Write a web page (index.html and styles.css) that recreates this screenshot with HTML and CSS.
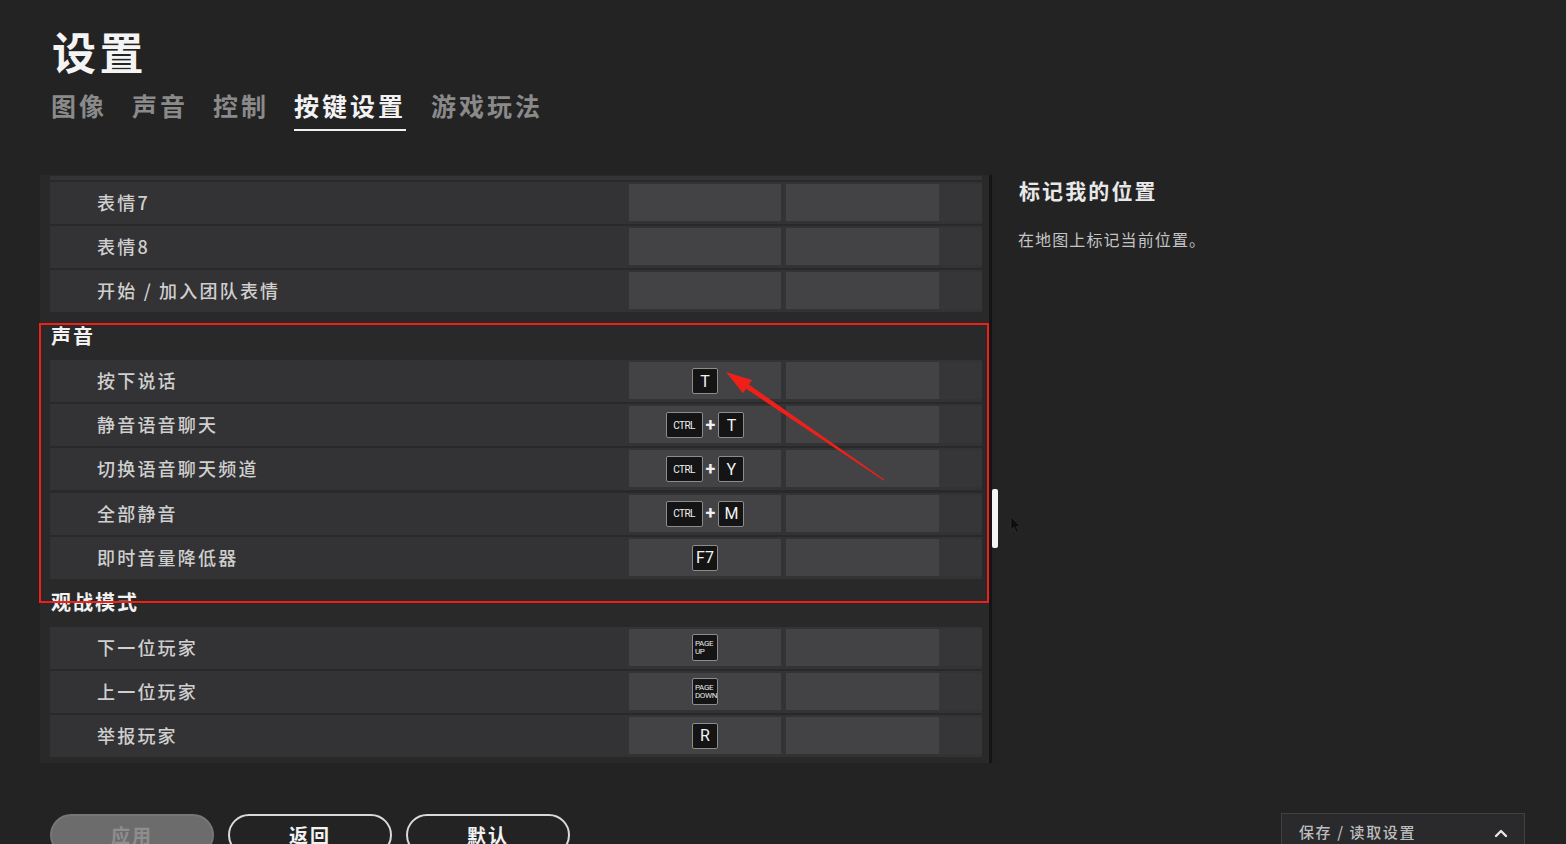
FILE: index.html
```html
<!DOCTYPE html>
<html lang="zh-CN">
<head>
<meta charset="utf-8">
<title>设置</title>
<link rel="stylesheet" href="styles.css">
</head>
<body>
<div class="page">
  <header class="head">
    <h1 class="title">设置</h1>
    <nav class="tabs">
      <span class="tab">图像</span>
      <span class="tab">声音</span>
      <span class="tab">控制</span>
      <span class="tab active">按键设置</span>
      <span class="tab">游戏玩法</span>
    </nav>
  </header>

  <main class="main">
    <section class="list-wrap">
      <div class="list">
        <div class="row partial"></div>
        <div class="row"><span class="label">表情7</span><span class="cell"></span><span class="cell"></span><span class="tail"></span></div>
        <div class="row"><span class="label">表情8</span><span class="cell"></span><span class="cell"></span><span class="tail"></span></div>
        <div class="row"><span class="label">开始 / 加入团队表情</span><span class="cell"></span><span class="cell"></span><span class="tail"></span></div>

        <div class="section-title">声音</div>
        <div class="row"><span class="label">按下说话</span><span class="cell"><span class="key">T</span></span><span class="cell"></span><span class="tail"></span></div>
        <div class="row"><span class="label">静音语音聊天</span><span class="cell"><span class="key wide small">CTRL</span><span class="plus">+</span><span class="key">T</span></span><span class="cell"></span><span class="tail"></span></div>
        <div class="row"><span class="label">切换语音聊天频道</span><span class="cell"><span class="key wide small">CTRL</span><span class="plus">+</span><span class="key">Y</span></span><span class="cell"></span><span class="tail"></span></div>
        <div class="row"><span class="label">全部静音</span><span class="cell"><span class="key wide small">CTRL</span><span class="plus">+</span><span class="key">M</span></span><span class="cell"></span><span class="tail"></span></div>
        <div class="row"><span class="label">即时音量降低器</span><span class="cell"><span class="key">F7</span></span><span class="cell"></span><span class="tail"></span></div>

        <div class="section-title">观战模式</div>
        <div class="row"><span class="label">下一位玩家</span><span class="cell"><span class="key tiny">PAGE<br>UP</span></span><span class="cell"></span><span class="tail"></span></div>
        <div class="row"><span class="label">上一位玩家</span><span class="cell"><span class="key tiny">PAGE<br>DOWN</span></span><span class="cell"></span><span class="tail"></span></div>
        <div class="row"><span class="label">举报玩家</span><span class="cell"><span class="key">R</span></span><span class="cell"></span><span class="tail"></span></div>
      </div>
      <div class="scroll"><div class="thumb"></div></div>
    </section>

    <aside class="info">
      <h2 class="info-title">标记我的位置</h2>
      <p class="info-desc">在地图上标记当前位置。</p>
    </aside>
  </main>

  <footer class="foot">
    <div class="buttons">
      <button class="btn disabled">应用</button>
      <button class="btn">返回</button>
      <button class="btn">默认</button>
    </div>
    <div class="save">
      <span>保存 / 读取设置</span>
      <svg class="chev" width="14" height="10" viewBox="0 0 14 10"><path d="M2 8 L7 3 L12 8" fill="none" stroke="#e6e6e6" stroke-width="2.4" stroke-linecap="round" stroke-linejoin="round"/></svg>
    </div>
  </footer>

  <div class="annot-box"></div>
  <svg class="annot-arrow" width="1566" height="844" viewBox="0 0 1566 844">
    <polygon points="726,372 752,380.1 748.9,384.6 884.3,479.6 883.7,480.4 746.1,388.8 743,393.3" fill="#ef1f1a"/>
  </svg>
  <svg class="cursor" width="12" height="18" viewBox="0 0 12 18"><path d="M1 1 L1 14 L4 11 L6.5 16.5 L8.5 15.5 L6 10.5 L10 10.5 Z" fill="#0d0d0d" stroke="#333" stroke-width="0.6"/></svg>
</div>
</body>
</html>
```

FILE: styles.css
```css
* { box-sizing: border-box; }

html, body {
  margin: 0;
  padding: 0;
  background: #232324;
  overflow: hidden;
}

body {
  font-family: "Noto Sans CJK SC", "Noto Sans", sans-serif;
  color: #e6e6e6;
}

.page {
  position: relative;
  width: 1566px;
  height: 844px;
  overflow: hidden;
  background: #232324;
}

/* header */
.head {
  padding: 24px 0 0 52px;
}

.title {
  margin: 0;
  font-size: 44px;
  line-height: 54px;
  font-weight: 700;
  letter-spacing: 3.5px;
  color: #f4f4f4;
}

.tabs {
  display: flex;
  gap: 25px;
  margin-top: 10px;
  margin-left: -1px;
}

.tab {
  font-size: 25px;
  line-height: 34px;
  font-weight: 700;
  letter-spacing: 3px;
  color: #8a8a8a;
  padding-bottom: 7px;
  border-bottom: 2px solid transparent;
}

.tab.active {
  color: #f2f2f2;
  border-bottom-color: #f0f0f0;
}

/* main */
.main {
  display: flex;
  margin-top: 44px;
}

.list-wrap {
  display: flex;
  margin-left: 40px;
  height: 588px;
}

.list {
  width: 949px;
  padding: 1px 7px 4px 10px;
  background: #29292a;
}

.row {
  display: flex;
  height: 42px;
  margin-bottom: 2.2px;
  background: #333335;
}

.row.partial {
  height: 4px;
  background: #343436;
  margin-bottom: 2px;
}

.label {
  width: 579px;
  padding-left: 47px;
  font-size: 18px;
  line-height: 40px;
  letter-spacing: 2.2px;
  color: #cfcfcf;
  font-weight: 500;
}

.cell {
  width: 152px;
  margin: 2px 0 3px;
  background: #434345;
  display: flex;
  align-items: center;
  justify-content: center;
  gap: 3px;
}

.cell + .cell {
  width: 153px;
  margin-left: 5px;
}

.tail {
  width: 43px;
  margin: 2px 0 3px;
  background: #363638;
}

.section-title {
  height: 45.5px;
  padding: 1px 0 0 1px;
  font-size: 20px;
  line-height: 40px;
  font-weight: 700;
  letter-spacing: 2px;
  color: #f2f2f2;
}

.key {
  width: 26px;
  height: 26px;
  background: #141414;
  border: 1px solid #8c8c8c;
  border-radius: 2px;
  display: flex;
  align-items: center;
  justify-content: center;
  font-family: "Roboto", "Liberation Sans", sans-serif;
  font-size: 16px;
  color: #f2f2f2;
  margin-top: 1px;
}

.key.wide {
  width: 37px;
}

.key.small {
  font-size: 10px;
  letter-spacing: -0.6px;
}

.key.tiny {
  display: block;
  height: 27px;
  font-size: 8px;
  line-height: 8px;
  padding: 5px 0 0 2px;
  letter-spacing: -0.4px;
  color: #e8e8e8;
  overflow: hidden;
}

.plus {
  font-family: "Roboto", "Liberation Sans", sans-serif;
  font-size: 18px;
  font-weight: 700;
  color: #f0f0f0;
  line-height: 26px;
}

/* scrollbar */
.scroll {
  width: 9px;
  background: #222223;
  padding-left: 3px;
  border-left: 3px solid #141415;
}

.thumb {
  margin-top: 314px;
  width: 6px;
  height: 59px;
  background: #f4f4f4;
  border-radius: 2px;
  margin-left: -3px;
}

/* info */
.info {
  margin-left: 20px;
  padding-left: 1px;
}

.info-title {
  margin: 0;
  font-size: 21px;
  line-height: 30px;
  font-weight: 700;
  letter-spacing: 2.1px;
  color: #e8e8e8;
}

.info-desc {
  margin: 22px 0 0 -1px;
  font-size: 16px;
  line-height: 24px;
  letter-spacing: 1.1px;
  color: #c4c4c4;
}

/* footer */
.foot {
  display: flex;
  justify-content: space-between;
  margin-top: 51px;
  padding: 0 41px 0 50px;
}

.buttons {
  display: flex;
  gap: 14px;
}

.btn {
  width: 164px;
  height: 42px;
  border: 2px solid #d9d9d9;
  border-radius: 21px;
  background: transparent;
  color: #f2f2f2;
  font-family: "Noto Sans CJK SC", sans-serif;
  font-size: 19px;
  font-weight: 700;
  letter-spacing: 2px;
  line-height: 36px;
  padding: 0;
}

.btn.disabled {
  background: #6c6c6c;
  border-color: #767676;
  color: #8e8e8e;
}

.save {
  width: 244px;
  height: 40px;
  margin-top: -1px;
  background: #2a2a2c;
  border: 1px solid #414143;
  display: flex;
  justify-content: space-between;
  align-items: flex-start;
  padding: 7px 16px 0 17px;
  font-size: 15px;
  line-height: 22px;
  letter-spacing: 1.6px;
  color: #bdbdbd;
  font-weight: 500;
}

.chev {
  margin-top: 7px;
}

/* annotation overlay */
.annot-box {
  position: absolute;
  left: 39px;
  top: 323px;
  width: 950px;
  height: 280px;
  border: 2px solid #ef1f1a;
}

.annot-arrow {
  position: absolute;
  left: 0;
  top: 0;
  pointer-events: none;
}

.cursor {
  position: absolute;
  left: 1010px;
  top: 516px;
}
```
